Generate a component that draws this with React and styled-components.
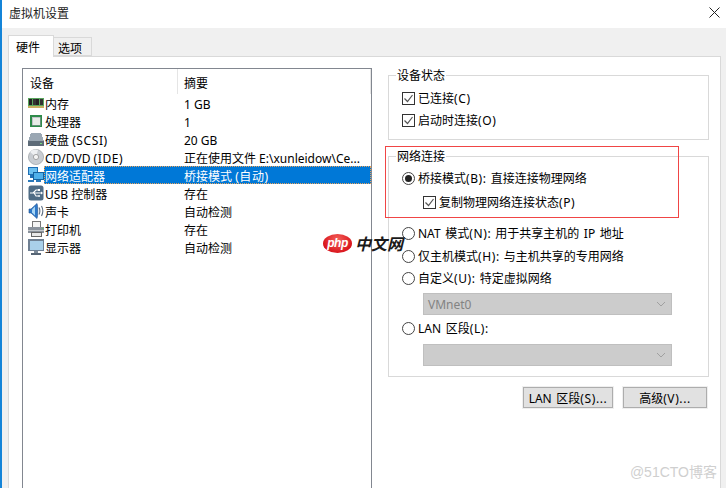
import React from "react";
import styled, { createGlobalStyle } from "styled-components";

const Global = createGlobalStyle`
  html, body { margin: 0; padding: 0; background: #fff; }
  body { font-family: "Noto Sans", "Noto Sans CJK SC", sans-serif; font-size: 12px; color: #000; }
  * { box-sizing: border-box; }
`;

const Win = styled.div`
  position: relative; width: 726px; height: 488px; overflow: hidden;
  display: flex; flex-direction: column; background: #f0f0f0; border-left: 2px solid #1484d8;
`;
const TitleBar = styled.div`
  height: 28px; background: #fff; display: flex; align-items: center; justify-content: space-between;
  padding: 0 6px 3px 7px; flex: none; color: #222;
`;
const Body = styled.div`
  flex: 1; min-height: 0; display: flex; flex-direction: column; padding: 7px 5px 0 6px;
`;
const TabRow = styled.div`
  display: flex; align-items: flex-start; height: 21px; flex: none; position: relative; z-index: 1;
`;
const Tab = styled.div`
  display: flex; align-items: center;
  width: ${p => p.$w}px; height: ${p => (p.$active ? 22 : 19)}px;
  margin-top: ${p => (p.$active ? 0 : 2)}px;
  padding: ${p => (p.$active ? "1px 0 0 7px" : "2px 0 0 4px")};
  background: ${p => (p.$active ? "#fff" : "#f0f0f0")};
  border: 1px solid #d9d9d9;
  border-bottom: ${p => (p.$active ? "none" : "1px solid #d9d9d9")};
  border-left: ${p => (p.$active ? "1px solid #d9d9d9" : "none")};
`;
const Panel = styled.div`
  flex: 1; min-height: 0; background: #fff; border: 1px solid #d9d9d9; border-bottom: none;
  display: flex; align-items: flex-start; padding: 10px 0 0 13px; overflow: hidden;
`;
const List = styled.div`
  width: 350px; height: 440px; margin-top: 1px; border: 1px solid #828790; flex: none; background: #fff;
`;
const ListHead = styled.div`
  display: grid; grid-template-columns: 155px 1fr; height: 25px;
`;
const HeadCell = styled.div`
  display: flex; align-items: center; padding: 2px 0 0 ${p => p.$pad}px; border-right: 1px solid #e5e5e5;
`;
const Row = styled.div`
  display: flex; height: 18px; padding-left: 5px;
`;
const IconCell = styled.div`
  width: 16px; height: 18px; flex: none; display: flex; align-items: center; justify-content: center;
`;
const RowBody = styled.div`
  flex: 1; display: grid; grid-template-columns: 139px 1fr; align-items: start; padding: 3px 0 0 1px;
  white-space: nowrap; line-height: 16px;
  background: ${p => (p.$sel ? "#0078d7" : "transparent")};
  color: ${p => (p.$sel ? "#fff" : "#000")};
  outline: ${p => (p.$sel ? "1px dotted #e8a25c" : "none")};
  outline-offset: -1px;
`;
const Key = styled.span`
  letter-spacing: 0.6px;
`;
const Side = styled.div`
  width: 321px; margin-left: 16px; flex: none; display: flex; flex-direction: column;
`;
const Group = styled.fieldset`
  margin: 0 0 ${p => p.$mb || 0}px; min-width: 0; border: 1px solid #d9d9d9;
  padding: ${p => p.$pt}px 0 0 13px; height: ${p => p.$h}px;
`;
const Legend = styled.legend`
  margin-left: -6px; padding: 0 1px; line-height: 18px; height: 16px;
`;
const OptRow = styled.div`
  display: flex; align-items: center; height: 22px; gap: 3px; margin-top: ${p => p.$mt || 0}px;
  margin-left: ${p => p.$ml || 0}px; white-space: pre; word-spacing: 1.5px;
`;
const CheckBox = styled.span`
  width: 13px; height: 13px; border: 1px solid #333; background: #fff; flex: none;
  display: flex; align-items: center; justify-content: center;
`;
const RadioMark = styled.span`
  width: 13px; height: 13px; border: 1px solid #444; border-radius: 50%; background: #fff; flex: none;
  display: flex; align-items: center; justify-content: center;
  &::after { content: ""; width: 7px; height: 7px; border-radius: 50%; background: ${p => (p.$on ? "#222" : "transparent")}; }
`;
const Select = styled.div`
  width: 249px; height: 22px; margin: ${p => p.$mt}px 0 0 21px; background: #ccc; border: 1px solid #bfbfbf;
  display: flex; align-items: center; justify-content: space-between; padding: 0 5px 0 4px; color: #838383;
`;
const Buttons = styled.div`
  display: flex; justify-content: flex-end; gap: 10px; margin: 10px 2px 0 0;
`;
const Btn = styled.div`
  width: ${p => p.$w}px; height: 21px; background: #e1e1e1; border: 1px solid #adadad;
  box-shadow: 0 0 0 1px #efefef; display: flex; align-items: center; justify-content: center;
  white-space: pre; word-spacing: 1.5px;
`;
const RedBox = styled.div`
  position: absolute; left: 383px; top: 146px; width: 294px; height: 72px; border: 1px solid #f04545; pointer-events: none;
`;
const PhpMark = styled.div`
  position: absolute; left: 321px; top: 234px; display: flex; align-items: center; gap: 3px;
`;
const PhpBadge = styled.div`
  width: 29px; height: 19px; border-radius: 50%; background: radial-gradient(ellipse at 50% 30%, #f4605a, #d8121a 75%);
  color: #fff; display: flex; align-items: center; justify-content: center;
  font: italic bold 12px "Liberation Sans", sans-serif; letter-spacing: -0.5px; padding-bottom: 1px;
`;
const PhpText = styled.div`
  font: italic bold 16px "Noto Sans CJK SC", sans-serif; color: #1a1a1a; line-height: 19px;
`;
const Stamp = styled.div`
  position: absolute; right: 9px; bottom: 7px; color: #cfcfcf; font: 14px "Liberation Sans", "Noto Sans CJK SC", sans-serif;
`;

const Ic = ({ children }) => <svg width="16" height="16" viewBox="0 0 16 16" shapeRendering="crispEdges">{children}</svg>;

const icons = {
  ram: <Ic><rect x="0" y="3" width="16" height="10" fill="#58a55c" /><rect x="1" y="4" width="3" height="6" fill="#222" /><rect x="4.5" y="4" width="3" height="6" fill="#333" /><rect x="8" y="4" width="3" height="6" fill="#222" /><rect x="12" y="4" width="3" height="6" fill="#333" /><rect x="0" y="11" width="16" height="2" fill="#c8b060" /></Ic>,
  cpu: <Ic><rect x="2" y="2" width="12" height="12" fill="#2e8b4a" /><rect x="4" y="4" width="8" height="8" fill="#e8ece8" stroke="#99a" strokeWidth="0.5" /></Ic>,
  hdd: <Ic><path d="M3 2h10l3 8H0z" fill="#9aa7b3" /><rect x="0" y="10" width="16" height="5" fill="#5d6b78" /><rect x="12" y="12" width="2" height="1" fill="#6fe07a" /></Ic>,
  cd: <svg width="16" height="16" viewBox="0 0 16 16"><circle cx="8" cy="8" r="7.6" fill="#c9cdd2" stroke="#8f959b" strokeWidth=".6" /><path d="M8 8L2 3a8 8 0 0 1 8-2z" fill="#eef0f2" /><circle cx="8" cy="8" r="2.6" fill="#f5f5f5" stroke="#888" strokeWidth=".7" /></svg>,
  net: <Ic><rect x="0" y="0" width="10" height="8" fill="#1f6fb5" /><rect x="1" y="1" width="8" height="6" fill="#6cc0f0" /><rect x="2" y="8" width="6" height="3" fill="#1f6fb5" /><rect x="5" y="5" width="11" height="8" fill="#17639f" /><rect x="6" y="6" width="9" height="6" fill="#4fb0ea" /><rect x="8" y="13" width="5" height="2" fill="#2a79bb" /><rect x="0" y="13" width="6" height="2" fill="#2a79bb" /></Ic>,
  usb: <svg width="16" height="16" viewBox="0 0 16 16"><rect x="0.5" y="0.5" width="15" height="15" rx="2.5" fill="#4f6c85" /><path d="M2 8h11M5 8l3-3h2M6 8l2 3h2" stroke="#fff" strokeWidth="1.1" fill="none" /><rect x="10" y="4" width="2" height="2" fill="#fff" /><circle cx="11" cy="11" r="1" fill="#fff" /><path d="M13 6.5l2 1.5-2 1.5z" fill="#fff" /></svg>,
  snd: <svg width="16" height="16" viewBox="0 0 16 16"><path d="M1 6h2l6-5.500c1 3 1 12 0 15l-6-5.500H1z" fill="#2d78c8" stroke="#1b4f8f" strokeWidth=".6" /><path d="M4 6.500l3-3v9l-3-3z" fill="#a8d6f5" /><path d="M11 4.500c1 2 1 5 0 7M13.500 3c1.600 3 1.600 7 0 10" stroke="#5f6f82" strokeWidth="1.1" fill="none" /></svg>,
  prn: <Ic><rect x="4" y="0" width="8" height="6" fill="#f4f4f4" stroke="#777" strokeWidth="1" /><rect x="0" y="6" width="16" height="6" fill="#8a929c" /><rect x="0" y="9" width="16" height="1" fill="#c4c8cc" /><rect x="14" y="7" width="1" height="1" fill="#55d060" /><rect x="3" y="11" width="10" height="4" fill="#e8e8e8" stroke="#666" strokeWidth="1" /></Ic>,
  mon: <Ic><rect x="0" y="0" width="16" height="12" fill="#6e7f92" /><rect x="1.500" y="1.500" width="13" height="9" fill="#a9cfe9" /><rect x="6" y="12" width="4" height="2" fill="#7d8a98" /><rect x="3" y="14" width="10" height="1.500" fill="#566575" /></Ic>,
};

const rows = [
  ["ram", "内存", "1 GB"],
  ["cpu", "处理器", "1"],
  ["hdd", <>硬盘 <Key>(SCSI)</Key></>, "20 GB"],
  ["cd", <>CD/DVD <Key>(IDE)</Key></>, "正在使用文件 E:\\xunleidow\\Ce..."],
  ["net", "网络适配器", <>桥接模式 <Key>(自动)</Key></>, true],
  ["usb", "USB 控制器", "存在"],
  ["snd", "声卡", "自动检测"],
  ["prn", "打印机", "存在"],
  ["mon", "显示器", "自动检测"],
];

const Check = () => (
  <CheckBox>
    <svg width="11" height="11" viewBox="0 0 11 11"><path d="M1.5 5.500l3 3 5-6.500" stroke="#555" strokeWidth="1.2" fill="none" /></svg>
  </CheckBox>
);
const Chevron = () => (
  <svg width="10" height="6" viewBox="0 0 10 6"><path d="M1 1l4 4 4-4" stroke="#a0a0a0" strokeWidth="1" fill="none" /></svg>
);

export default function App() {
  return (
    <Win>
      <Global />
      <TitleBar>
        <span>虚拟机设置</span>
        <svg width="11" height="11" viewBox="0 0 11 11"><path d="M.5.5l10 10M10.500.5l-10 10" stroke="#222" strokeWidth="1" /></svg>
      </TitleBar>
      <Body>
        <TabRow>
          <Tab $w={46} $active>硬件</Tab>
          <Tab $w={38}>选项</Tab>
        </TabRow>
        <Panel>
          <List>
            <ListHead>
              <HeadCell $pad={7}>设备</HeadCell>
              <HeadCell $pad={6}>摘要</HeadCell>
            </ListHead>
            {rows.map(([ic, name, sum, sel]) => (
              <Row key={ic}>
                <IconCell>{icons[ic]}</IconCell>
                <RowBody $sel={sel}>
                  <span>{name}</span>
                  <span>{sum}</span>
                </RowBody>
              </Row>
            ))}
          </List>
          <Side>
            <Group $mb={8} $pt={4} $h={73}>
              <Legend>设备状态</Legend>
              <OptRow><Check /><span>已连接<Key>(C)</Key></span></OptRow>
              <OptRow><Check /><span>启动时连接<Key>(O)</Key></span></OptRow>
            </Group>
            <Group $pt={3} $h={229}>
              <Legend>网络连接</Legend>
              <OptRow><RadioMark $on /><span>桥接模式<Key>(B)</Key>: 直接连接物理网络</span></OptRow>
              <OptRow $mt={2} $ml={21}><Check /><span>复制物理网络连接状态<Key>(P)</Key></span></OptRow>
              <OptRow $mt={9}><RadioMark /><span>NAT 模式<Key>(N)</Key>: 用于共享主机的 IP 地址</span></OptRow>
              <OptRow $mt={1}><RadioMark /><span>仅主机模式<Key>(H)</Key>: 与主机共享的专用网络</span></OptRow>
              <OptRow><RadioMark /><span>自定义<Key>(U)</Key>: 特定虚拟网络</span></OptRow>
              <Select $mt={4}>VMnet0<Chevron /></Select>
              <OptRow $mt={2}><RadioMark /><span>LAN 区段<Key>(L)</Key>:</span></OptRow>
              <Select $mt={5}><span /><Chevron /></Select>
            </Group>
            <Buttons>
              <Btn $w={90}><span>LAN 区段<Key>(S)...</Key></span></Btn>
              <Btn $w={84}><span>高级<Key>(V)...</Key></span></Btn>
            </Buttons>
          </Side>
        </Panel>
      </Body>
      <RedBox />
      <PhpMark>
        <PhpBadge>php</PhpBadge>
        <PhpText>中文网</PhpText>
      </PhpMark>
      <Stamp>@51CTO博客</Stamp>
    </Win>
  );
}
